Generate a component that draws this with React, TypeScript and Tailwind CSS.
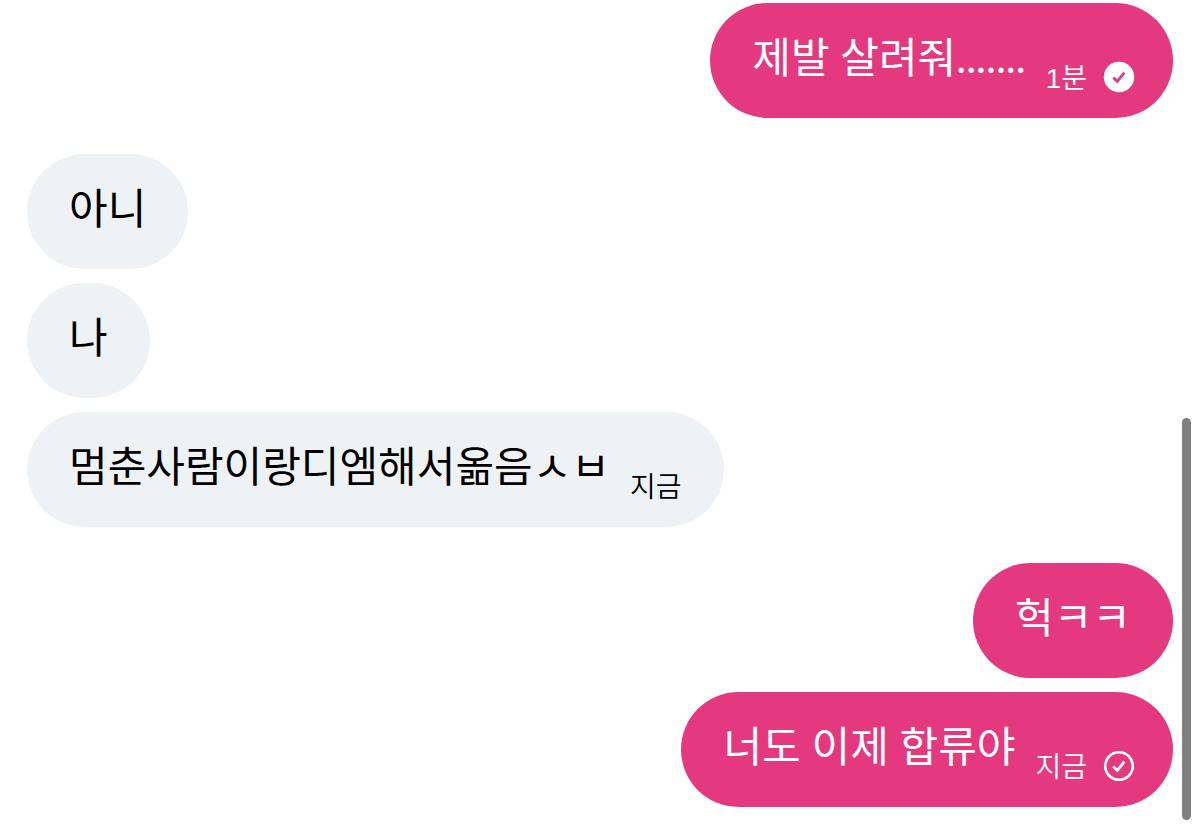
type Status = "read" | "sent";

type Message = {
  text: string;
  mine?: boolean;
  time?: string;
  status?: Status;
};

const groups: Message[][] = [
  [{ text: "제발 살려줘.......", mine: true, time: "1분", status: "read" }],
  [
    { text: "아니" },
    { text: "나" },
    { text: "멈춘사람이랑디엠해서옮음ㅅㅂ", time: "지금" },
  ],
  [
    { text: "헉ㅋㅋ", mine: true },
    { text: "너도 이제 합류야", mine: true, time: "지금", status: "sent" },
  ],
];

function StatusIcon({ status }: { status: Status }) {
  const read = status === "read";

  return (
    <svg
      viewBox="0 0 32 32"
      className="ml-4 size-8 shrink-0"
      role="img"
      aria-label={status}
      fill="none"
    >
      {read ? (
        <circle cx="16" cy="16" r="15.2" fill="#fff" />
      ) : (
        <circle cx="16" cy="16" r="13.8" stroke="#fff" strokeWidth="2.6" />
      )}
      <path
        d="M10.3 16.6 14.3 20.4 21.3 11.6"
        stroke={read ? "#e5397f" : "#fff"}
        strokeWidth="2.8"
      />
    </svg>
  );
}

function Bubble({ text, mine, time, status }: Message) {
  return (
    <li
      className={`flex h-[115px] max-w-full items-start rounded-[58px] pt-6 pl-[42px] ${
        status ? "pr-[38px]" : "pr-[42px]"
      } ${mine ? "self-end bg-[#e5397f] text-white" : "self-start bg-[#eef2f4] text-black"}`}
    >
      <p className="font-['Lato','Noto_Sans_CJK_KR',sans-serif] text-[42px] leading-[60px] whitespace-nowrap">
        {text}
      </p>

      {time && (
        <div className="mt-7 ml-5 flex items-center">
          <time className="pt-1 font-['Liberation_Sans','Noto_Sans_CJK_KR',sans-serif] text-[28px] leading-10 font-[350] whitespace-nowrap">
            {time}
          </time>
          {status && <StatusIcon status={status} />}
        </div>
      )}
    </li>
  );
}

export default function App() {
  return (
    <main className="relative min-h-screen bg-white">
      <div className="flex flex-col gap-9 pt-[3px] pr-[27px] pb-5 pl-[27px]">
        {groups.map((group, i) => (
          <ul key={i} className="flex flex-col gap-3.5">
            {group.map((message) => (
              <Bubble key={message.text} {...message} />
            ))}
          </ul>
        ))}
      </div>

      {/* SCROLL THUMB */}
      <div className="absolute right-[9px] bottom-[9px] h-[402px] w-[9px] rounded-full bg-[#808080]" />
    </main>
  );
}
